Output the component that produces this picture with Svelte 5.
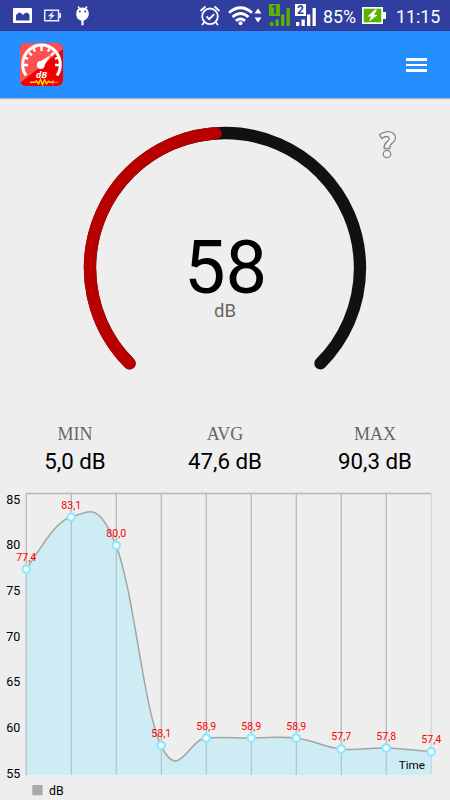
<script>
  /**
   * Sound meter screen: gauge, min / avg / max row and history chart
   */

  const level = 58.2
  const RADIUS = 135
  const SWEEP = 270
  const MAX_LEVEL = 120

  const stats = [
    { label: 'MIN', value: '5,0 dB' },
    { label: 'AVG', value: '47,6 dB' },
    { label: 'MAX', value: '90,3 dB' },
  ]

  const samples = [77.4, 83.1, 80.0, 58.1, 58.9, 58.9, 58.9, 57.7, 57.8, 57.4]
  const ticks = [85, 80, 75, 70, 65, 60, 55]

  // Chart geometry, in pixels of the chart svg
  const LEFT = 26
  const TOP = 13.5
  const BOTTOM = 295
  const STEP = 45

  function yOf(v) {
    return 271.7 - (v - 57.4) * 9.13
  }

  const points = samples.map((v, i) => ({
    x: LEFT + i * STEP,
    y: yOf(v),
    text: v.toFixed(1).replace('.', ','),
  }))

  /**
   * Point on the gauge circle for a given level
   */
  function onGauge(v) {
    const a = ((135 + (v / MAX_LEVEL) * SWEEP) * Math.PI) / 180
    return { x: 150 + RADIUS * Math.cos(a), y: 150 + RADIUS * Math.sin(a) }
  }

  function arc(to) {
    const s = onGauge(0)
    const e = onGauge(to)
    const large = (to / MAX_LEVEL) * SWEEP > 180 ? 1 : 0
    return `M${s.x} ${s.y}A${RADIUS} ${RADIUS} 0 ${large} 1 ${e.x} ${e.y}`
  }

  /**
   * Cubic line through all points, 0.2 smoothing
   */
  function smooth(pts) {
    const k = 0.2
    let d = `M${pts[0].x} ${pts[0].y}`
    for (let i = 1; i < pts.length; i++) {
      const pp = pts[Math.max(i - 2, 0)]
      const p = pts[i - 1]
      const c = pts[i]
      const n = pts[Math.min(i + 1, pts.length - 1)]
      d += `C${p.x + (c.x - pp.x) * k} ${p.y + (c.y - pp.y) * k} ${c.x - (n.x - p.x) * k} ${c.y - (n.y - p.y) * k} ${c.x} ${c.y}`
    }
    return d
  }

  const line = smooth(points)
  const area = `${line}V${BOTTOM}H${LEFT}Z`
</script>

<div class="screen">
  <div class="status">
    <svg class="status-left" width="100" height="31" viewBox="0 0 100 31">
      <path fill="#fff" fill-rule="evenodd" d="M14 8h17q1 0 1 1v13q0 1-1 1H14q-1 0-1-1V9q0-1 1-1zM16 20.500h13.500v-6l-2.500-2-2 .5-2 2-2-2-2-.5-3 2.500z" />
      <path fill="none" stroke="#e8ebff" stroke-width="1.500" d="M44.700 10.200h13.800v10.600H44.700z" />
      <path fill="#e8ebff" d="M59.200 13h1.800v5h-1.800zM53.800 10.800l-6 5.400h3.200l-2 4.200 6-5.400h-3.200z" />
      <path fill="#fff" d="M76.500 11.500a6.200 5.500 0 0 1 12 0q1 4-1.500 7-2 2-3.400 2.200v4.500h-2.200v-4.500q-1.800-.2-4-2.200-2-3-.9-7z" />
      <path stroke="#fff" stroke-width="1.400" d="M78 6.500l2 2.500M87 6.500l-2 2.500" />
      <circle cx="79.800" cy="11.500" r="1" fill="#303f9f" />
      <circle cx="85.200" cy="11.500" r="1" fill="#303f9f" />
    </svg>
    <div class="status-right">
      <svg width="122" height="31" viewBox="198 0 122 31">
        <g fill="none" stroke="#fff" stroke-width="1.800">
          <circle cx="210" cy="16.300" r="7.800" />
          <path d="M206.500 16.500l2.700 2.700 5-5M200.500 11l5-4.500M219.500 11l-5-4.500M204.500 22l-2.500 3M215.500 22l2.500 3" />
        </g>
        <g fill="none" stroke="#fff" stroke-width="2.800">
          <path d="M229 12.800q11.500-10 23 0M232.500 17q8-7 16 0M236 20.900q4.500-4 9 0" />
        </g>
        <circle cx="240.500" cy="23.200" r="2" fill="#fff" />
        <path fill="#fff" d="M254.500 13.500l3.500-5 3.500 5zM254.500 17.500l3.500 5 3.500-5z" />
        <path fill="#59b200" d="M270 22h3.300v4h-3.300zM275.500 19.500h3.300V26h-3.300zM281 14.500h3.300V26h-3.300zM286.500 8h3.300v18h-3.300zM269 4h11v12h-11z" />
        <path fill="#fff" d="M296 22h3.300v4H296zM301.500 19.500h3.300V26h-3.300zM307 14.500h3.300V26H307zM312.500 8h3.300v18h-3.300zM295 4h11v12h-11z" />
        <text class="sim" x="274.500" y="14.300">1</text>
        <text class="sim" x="300.500" y="14.300">2</text>
      </svg>
      <span class="percent">85%</span>
      <svg class="battery" width="24" height="18" viewBox="0 0 24 18">
        <path fill="#fff" d="M0 0h21v5h3v7h-3v5H0z" />
        <path fill="#59b200" d="M1.700 1.700h17.600v13.600H1.700z" />
        <path fill="#fff" d="M13 2.500L5.500 9.500H9L7 14.500l8.500-6.500H12l3-5.500z" />
      </svg>
      <span class="clock">11:15</span>
    </div>
  </div>

  <header>
    <svg width="43" height="43" viewBox="0 0 43 43">
      <defs>
        <clipPath id="logo"><rect width="43" height="43" rx="6" /></clipPath>
      </defs>
      <g clip-path="url(#logo)">
        <rect width="43" height="43" fill="#f00000" />
        <path fill="#ff5050" d="M0 0h43v6L0 40z" />
      </g>
      <path fill="none" stroke="#fff" stroke-width="3" d="M6 32.500A18.800 19.500 0 1 1 37 32.500" />
      <path stroke="#fff" stroke-width="2.400" d="M3 22h5M40 22h-5M21.500 3v5M9 9.500l3 3M34 9.500l-3 3M13.500 5.500l1.500 3M29.500 5.500L28 8.500M5 14.500l3 1.500M38 14.500l-3 1.500" />
      <path fill="#fff" d="M31.500 11.500l-8 12-5-4z" />
      <circle cx="20.800" cy="22" r="3.900" fill="#fff" />
      <text class="logo-text" x="21.500" y="35.200">dB</text>
      <path fill="none" stroke="#ffe000" stroke-width="1.400" d="M10 39.300h5l1.500-1.500 2 3 2-4.500 2 5.500 2-5 2 4 2-2.500 1.500 1h4" />
      <path stroke="#ff9a8a" stroke-width=".8" d="M32 39.300h6M33 36.500v5" />
    </svg>
    <div class="menu">
      <span></span>
      <span></span>
      <span></span>
    </div>
  </header>

  <main>
    <section class="meter">
      <svg class="gauge" width="300" height="270" viewBox="0 0 300 270">
        <path class="track" d={arc(MAX_LEVEL)} />
        <path class="fill" d={arc(level)} />
        <text class="level" x="150.500" y="175">{Math.floor(level)}</text>
        <text class="unit" x="150" y="199.300">dB</text>
      </svg>
      <svg class="help" width="22" height="32" viewBox="0 0 22 32">
        <path d="M1.500 4.500Q9.500-.5 15 3Q20 7.500 15 12.500Q11.500 15 11.800 18.500H6.200Q5.500 14.500 9.500 11.300Q12.500 8.500 10.500 7Q7.500 5.500 3.700 8.500Z" />
        <circle cx="9" cy="24" r="3.700" />
      </svg>
    </section>

    <section class="stats">
      {#each stats as stat}
        <div class="stat">
          <span class="label">{stat.label}</span>
          <span class="value">{stat.value}</span>
        </div>
      {/each}
    </section>

    <svg class="chart" width="450" height="320" viewBox="0 0 450 320">
      {#each points as p, i}
        <path class="grid" class:last={i === points.length - 1} d="M{p.x + 0.3} {TOP}V{BOTTOM}" />
      {/each}
      <path class="grid" d="M{LEFT} {TOP}H431" />
      <path class="area" d={area} />
      <path class="line" d={line} />
      {#each ticks as t, i}
        <text class="tick" x="20.300" y={23.7 + i * 45.67}>{t}</text>
      {/each}
      {#each points as p}
        <circle class="dot" cx={p.x + 0.2} cy={p.y} r="3.700" />
        <text class="point" x={p.x + 0.3} y={p.y - 8.5}>{p.text}</text>
      {/each}
      <text class="axis" x="425" y="289.300">Time</text>
      <rect x="32.300" y="305" width="10.300" height="10.300" fill="#aaa" />
      <text class="axis legend" x="49" y="315">dB</text>
    </svg>
  </main>
</div>

<style>
  :global(body) {
    margin: 0;
    background: #eee;
  }

  .screen {
    width: 450px;
    height: 800px;
    overflow: hidden;
    background: #eee;
    font-family: Roboto, sans-serif;
  }

  svg {
    display: block;
    flex-shrink: 0;
  }

  .status {
    height: 31px;
    display: flex;
    justify-content: space-between;
    background: #303f9f;
    color: #fff;
  }

  .status-right {
    display: flex;
    align-items: center;
    padding-right: 10px;
  }

  .percent {
    width: 33px;
    margin-left: 3px;
    font-size: 17.800px;
    line-height: 31px;
    padding-top: 2px;
  }

  .battery {
    margin-left: 6px;
  }

  .clock {
    width: 44px;
    margin-left: 10px;
    padding-top: 2px;
    font-size: 17.800px;
    line-height: 31px;
    text-align: right;
  }

  .sim {
    font-size: 12px;
    font-weight: 700;
    fill: #303f9f;
    text-anchor: middle;
  }

  header {
    height: 67px;
    box-sizing: border-box;
    display: flex;
    align-items: center;
    justify-content: space-between;
    padding: 0 23px 0 20px;
    background: #268fff;
    box-shadow: 0 1px 1px #b0b0b8;
  }

  .logo-text {
    font-family: 'Open Sans', sans-serif;
    font-size: 9.500px;
    font-weight: 700;
    font-style: italic;
    fill: #fff;
    text-anchor: middle;
  }

  .menu {
    width: 21px;
    display: flex;
    flex-direction: column;
    gap: 3px;
    padding-top: 1px;
  }

  .menu span {
    height: 2.600px;
    background: #fff;
  }

  .meter {
    height: 319px;
    box-sizing: border-box;
    display: flex;
    padding: 19.500px 0 0 75px;
  }

  .help {
    margin: 12px 0 0 3px;
    fill: #f4f4f4;
    stroke: #858585;
    stroke-width: 1.300;
  }

  .track,
  .fill {
    fill: none;
    stroke-width: 12.300;
    stroke-linecap: round;
  }

  .track {
    stroke: #111;
  }

  .fill {
    stroke: #b80000;
  }

  .level {
    font-size: 74px;
    text-anchor: middle;
  }

  .unit {
    font-size: 18.500px;
    fill: #666;
    text-anchor: middle;
  }

  .stats {
    height: 63px;
    display: flex;
  }

  .stat {
    flex: 1;
    display: flex;
    flex-direction: column;
    align-items: center;
    padding-top: 5px;
  }

  .label {
    font-family: 'Liberation Serif', serif;
    font-size: 18px;
    line-height: 24px;
    color: #666;
  }

  .value {
    font-size: 22.300px;
    line-height: 30px;
    color: #000;
  }

  .grid {
    fill: none;
    stroke: #b8b8b8;
    stroke-width: 1.300;
  }

  .last {
    stroke: #d5d5d5;
  }

  .area {
    fill: #8ceaff;
    fill-opacity: 0.330;
  }

  .line {
    fill: none;
    stroke: #a5a5a5;
    stroke-width: 1.500;
  }

  .dot {
    fill: #fff;
    stroke: #8ceaff;
    stroke-width: 2.300;
  }

  .tick {
    font-size: 12.500px;
    text-anchor: end;
  }

  .point {
    font-size: 10.600px;
    fill: #f00;
    text-anchor: middle;
  }

  .axis {
    font-size: 11.700px;
    text-anchor: end;
  }

  .legend {
    font-size: 12.300px;
    text-anchor: start;
  }
</style>
